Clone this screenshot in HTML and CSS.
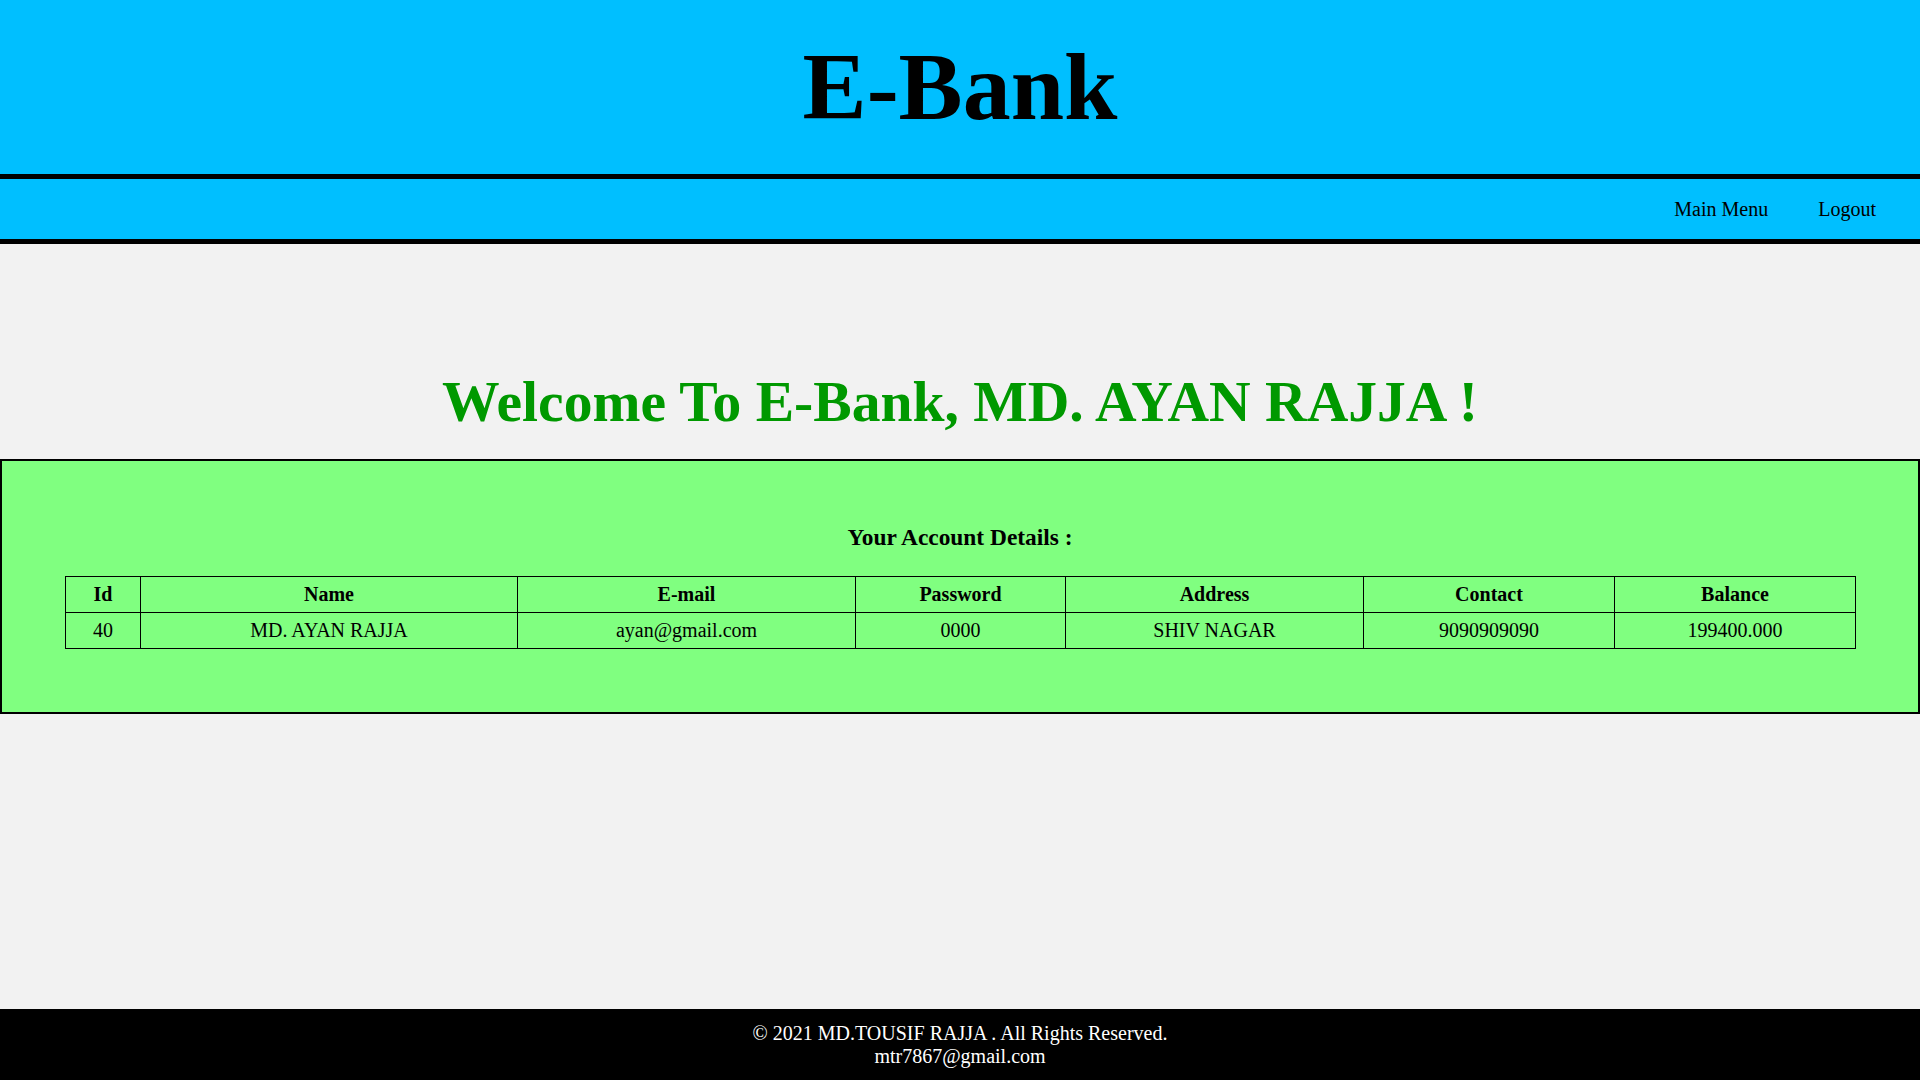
FILE: index.html
```html
<!DOCTYPE html>
<html lang="en">
<head>
<meta charset="utf-8">
<title>E-Bank</title>
<link rel="stylesheet" href="styles.css">
</head>
<body>
<header class="site-header">
  <h1 class="brand">E-Bank</h1>
</header>
<nav class="topnav">
  <a class="nav-link" href="#">Main Menu</a>
  <a class="nav-link" href="#">Logout</a>
</nav>
<main class="main">
  <h2 class="welcome">Welcome To E-Bank, MD. AYAN RAJJA !</h2>
  <section class="account-box">
    <h3 class="account-title">Your Account Details :</h3>
    <table class="account-table">
      <colgroup>
        <col class="c-id"><col class="c-name"><col class="c-mail"><col class="c-pass"><col class="c-addr"><col class="c-contact"><col class="c-bal">
      </colgroup>
      <thead>
        <tr><th>Id</th><th>Name</th><th>E-mail</th><th>Password</th><th>Address</th><th>Contact</th><th>Balance</th></tr>
      </thead>
      <tbody>
        <tr><td>40</td><td>MD. AYAN RAJJA</td><td>ayan@gmail.com</td><td>0000</td><td>SHIV NAGAR</td><td>9090909090</td><td>199400.000</td></tr>
      </tbody>
    </table>
  </section>
</main>
<footer class="site-footer">
  <div>&copy; 2021 MD.TOUSIF RAJJA . All Rights Reserved.</div>
  <div>mtr7867@gmail.com</div>
</footer>
</body>
</html>
```
FILE: styles.css
```css
html, body {
  margin: 0;
  padding: 0;
}
body {
  font-family: "Liberation Serif", "Times New Roman", serif;
  font-size: 20px;
  line-height: 23px;
  background: #f2f2f2;
  color: #000;
  min-height: 100vh;
  display: flex;
  flex-direction: column;
}
.site-header {
  background: #00bfff;
  border-bottom: 5px solid #000;
  padding: 34px 0;
  text-align: center;
}
.brand {
  margin: 0;
  font-size: 96px;
  line-height: 106px;
  font-weight: bold;
}
.topnav {
  background: #00bfff;
  border-bottom: 5px solid #000;
  height: 60px;
  display: flex;
  justify-content: flex-end;
  align-items: center;
  gap: 50px;
  padding-right: 44px;
}
.nav-link {
  color: #000;
  text-decoration: none;
  font-size: 20px;
  line-height: 23px;
}
.main {
  padding-top: 126px;
}
.welcome {
  margin: 0 0 25px;
  font-size: 57.6px;
  line-height: 64px;
  font-weight: bold;
  color: #009900;
  text-align: center;
}
.account-box {
  background: #80ff80;
  border: 2px solid #000;
  padding: 63px;
}
.account-title {
  margin: 0 0 25px;
  font-size: 23.4px;
  line-height: 27px;
  font-weight: bold;
  text-align: center;
}
.account-table {
  width: 100%;
  border-collapse: collapse;
  table-layout: fixed;
  border: 1px solid #000;
}
.account-table th,
.account-table td {
  border: 1px solid #000;
  padding: 6px 4px;
  line-height: 23px;
  text-align: center;
  font-size: 20px;
}
.account-table th {
  font-weight: bold;
}
.c-id { width: 75px; }
.c-name { width: 377px; }
.c-mail { width: 338px; }
.c-pass { width: 210px; }
.c-addr { width: 298px; }
.c-contact { width: 251px; }
.c-bal { width: 241px; }
.site-footer {
  margin-top: auto;
  background: #000;
  color: #fff;
  text-align: center;
  padding: 13px 0 12px;
  line-height: 23px;
}
```
